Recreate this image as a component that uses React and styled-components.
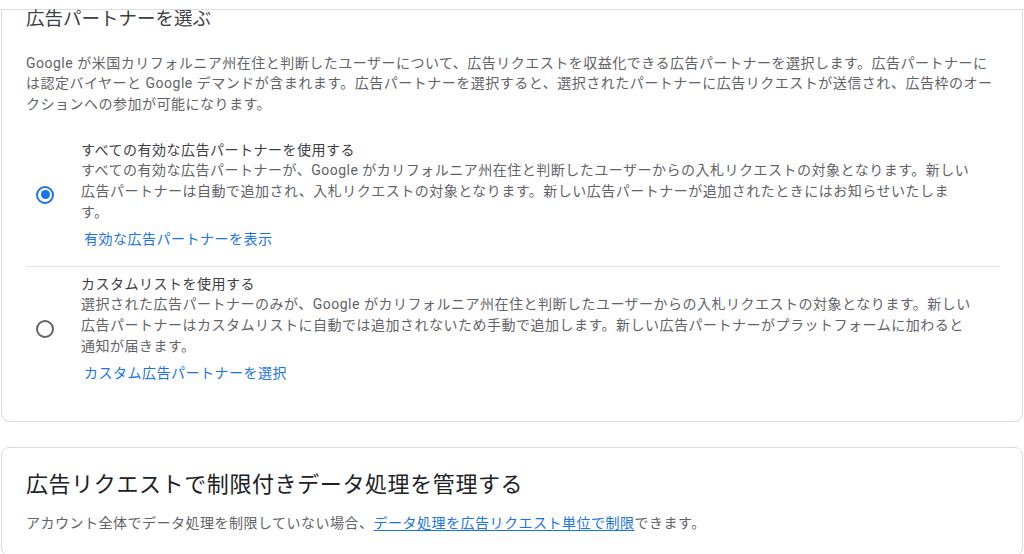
import React from 'react';
import styled, { createGlobalStyle } from 'styled-components';

const GlobalStyle = createGlobalStyle`
  html, body {
    margin: 0;
    background: #fff;
  }
  body {
    font-family: Roboto, "Noto Sans CJK JP", sans-serif;
    -webkit-font-smoothing: antialiased;
  }
`;

const Page = styled.div`
  width: 1024px;
  height: 554px;
  overflow: hidden;
  box-sizing: border-box;
  padding: 9px 1px 0;
  display: flex;
  flex-direction: column;
  gap: 25px;
`;

const Card = styled.section`
  flex-shrink: 0;
  background: #fff;
  border: 1px solid #dadce0;
  border-radius: ${({ $cutTop }) => ($cutTop ? '0 0 8px 8px' : '8px')};
  padding: ${({ $cutTop }) => ($cutTop ? '0 22px 21px 24px' : '23px 22px 22px 24px')};
`;

const CardTitle = styled.h2`
  margin: 0;
  font-weight: 400;
  color: ${({ $large }) => ($large ? '#202124' : '#3c4043')};
  font-size: ${({ $large }) => ($large ? '22px' : '18.5px')};
  letter-spacing: ${({ $large }) => ($large ? '0.6px' : '0')};
  line-height: ${({ $large }) => ($large ? '28px' : '18px')};
`;

const Text = styled.p`
  margin: ${({ $gap }) => $gap || '0'} 0 0;
  font-size: 14px;
  letter-spacing: 0.5px;
  line-height: 20.7px;
  color: #5f6368;
`;

const OptionList = styled.div`
  margin-top: 18px;
  display: flex;
  flex-direction: column;
`;

const Option = styled.label`
  display: flex;
  align-items: center;
  gap: 27px;
  padding: 7px 26px 16px 10px;
  border-bottom: ${({ $last }) => ($last ? 'none' : '1px solid #e3e5e8')};
  cursor: pointer;
`;

const Radio = styled.span`
  flex-shrink: 0;
  width: 18px;
  height: 18px;
  box-sizing: border-box;
  border-radius: 50%;
  border: 2px solid ${({ $checked }) => ($checked ? '#1a73e8' : '#5f6368')};
  display: flex;
  align-items: center;
  justify-content: center;

  &::after {
    content: '';
    width: 9px;
    height: 9px;
    border-radius: 50%;
    background: ${({ $checked }) => ($checked ? '#1a73e8' : 'transparent')};
  }
`;

const OptionBody = styled.div`
  flex: 1;
  min-width: 0;
`;

const OptionTitle = styled.div`
  font-size: 14px;
  letter-spacing: 0.5px;
  line-height: 20.7px;
  color: #3c4043;
`;

const OptionLink = styled.a`
  display: inline-block;
  margin: 6.5px 0 0 3px;
  font-size: 14px;
  letter-spacing: 0.5px;
  line-height: 20.7px;
  color: #1a73e8;
  text-decoration: none;
`;

const InlineLink = styled.a`
  color: #1a73e8;
  text-decoration: underline;
  text-underline-offset: 2px;
`;

const options = [
  {
    title: 'すべての有効な広告パートナーを使用する',
    text:
      'すべての有効な広告パートナーが、Google がカリフォルニア州在住と判断したユーザーからの入札リクエストの対象となります。新しい広告パートナーは自動で追加され、入札リクエストの対象となります。新しい広告パートナーが追加されたときにはお知らせいたします。',
    link: '有効な広告パートナーを表示',
    checked: true,
  },
  {
    title: 'カスタムリストを使用する',
    text:
      '選択された広告パートナーのみが、Google がカリフォルニア州在住と判断したユーザーからの入札リクエストの対象となります。新しい広告パートナーはカスタムリストに自動では追加されないため手動で追加します。新しい広告パートナーがプラットフォームに加わると通知が届きます。',
    link: 'カスタム広告パートナーを選択',
    checked: false,
  },
];

export default function App() {
  return (
    <>
      <GlobalStyle />
      <Page>
        <Card $cutTop>
          <CardTitle>広告パートナーを選ぶ</CardTitle>
          <Text $gap="24.6px">
            Google が米国カリフォルニア州在住と判断したユーザーについて、広告リクエストを収益化できる広告パートナーを選択します。広告パートナーには認定バイヤーと Google デマンドが含まれます。広告パートナーを選択すると、選択されたパートナーに広告リクエストが送信され、広告枠のオークションへの参加が可能になります。
          </Text>
          <OptionList>
            {options.map((opt, i) => (
              <Option key={opt.title} $last={i === options.length - 1}>
                <Radio $checked={opt.checked} />
                <OptionBody>
                  <OptionTitle>{opt.title}</OptionTitle>
                  <Text>{opt.text}</Text>
                  <OptionLink href="#">{opt.link}</OptionLink>
                </OptionBody>
              </Option>
            ))}
          </OptionList>
        </Card>
        <Card>
          <CardTitle $large>広告リクエストで制限付きデータ処理を管理する</CardTitle>
          <Text $gap="14px">
            アカウント全体でデータ処理を制限していない場合、
            <InlineLink href="#">データ処理を広告リクエスト単位で制限</InlineLink>
            できます。
          </Text>
        </Card>
      </Page>
    </>
  );
}
